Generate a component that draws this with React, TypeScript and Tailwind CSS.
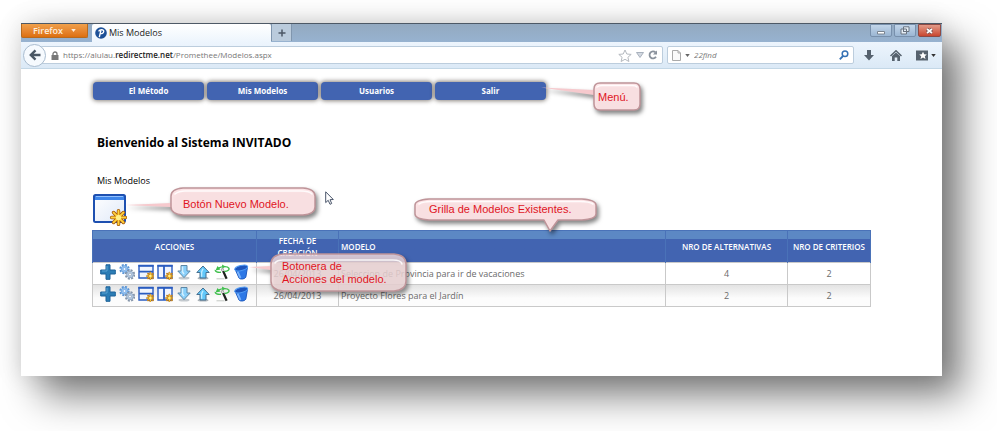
import type { ReactNode } from "react";

const uiFont = "font-['Open_Sans','Noto_Sans',sans-serif]";

function Spark({ x, y, s }: { x: number; y: number; s: number }) {
  return (
    <g transform={`translate(${x} ${y}) scale(${s})`} strokeLinecap="round">
      <path d="M0-7V7M-7 0H7M-5-5L5 5M-5 5L5-5" stroke="#a65a08" strokeWidth="3.6" />
      <path d="M0-7V7M-7 0H7M-5-5L5 5M-5 5L5-5" stroke="#ffd23c" strokeWidth="2" />
      <circle r="2.6" fill="#fff08a" />
    </g>
  );
}

function Icon({ children }: { children: ReactNode }) {
  return (
    <svg viewBox="0 0 16 16" className="block size-4" fill="none" aria-hidden="true">
      {children}
    </svg>
  );
}

const PlusIcon = () => (
  <Icon>
    <path d="M6 .8h4v5.200h5.300v4H10v5.300H6V10H.7V6H6z" fill="#2c7db5" stroke="#1f6399" strokeLinejoin="round" />
    <path d="M7 2v5H2" stroke="#5ba3d2" />
  </Icon>
);

const GearsIcon = () => (
  <Icon>
    <circle cx="5.500" cy="5" r="4.200" stroke="#5a94d6" strokeWidth="2" strokeDasharray="2 1.300" />
    <circle cx="5.500" cy="5" r="3.300" fill="#9cc8f4" stroke="#6fa6e0" />
    <circle cx="5.500" cy="5" r="1.500" fill="#eef6ff" stroke="#5a94d6" strokeWidth=".6" />
    <circle cx="11" cy="10.500" r="4.200" stroke="#8494a8" strokeWidth="2" strokeDasharray="2 1.300" />
    <circle cx="11" cy="10.500" r="3.300" fill="#bcd2ea" stroke="#93a9c4" />
    <circle cx="11" cy="10.500" r="1.500" fill="#f4f8fc" stroke="#7d90a8" strokeWidth=".6" />
  </Icon>
);

const RowsIcon = () => (
  <Icon>
    <path d="M1 1.500h14v12.500H1z" fill="#f0f5fe" stroke="#2a5cc0" strokeWidth="1.400" />
    <path d="M.4 1.800h15.200M1 7.600h14" stroke="#2a5cc0" strokeWidth="1.800" />
    <Spark x={12.4} y={12} s={0.48} />
  </Icon>
);

const ColumnsIcon = () => (
  <Icon>
    <path d="M1 1.500h14v12.500H1z" fill="#f0f5fe" stroke="#2a5cc0" strokeWidth="1.400" />
    <path d="M.4 1.800h15.200M7 2v12" stroke="#2a5cc0" strokeWidth="1.800" />
    <Spark x={12.4} y={12} s={0.48} />
  </Icon>
);

const DownIcon = () => (
  <Icon>
    <ellipse cx="8" cy="14" rx="5.500" ry="1.500" fill="#c3c9ce" />
    <path d="M5 1.500h6v5.500h3.200L8 13.600 1.800 7H5z" fill="#8ad0fa" stroke="#5c87a6" strokeLinejoin="round" />
    <path d="M6.500 2.500v5.500l1.500 2" stroke="#d4f0ff" strokeWidth="1.500" />
  </Icon>
);

const UpIcon = () => (
  <Icon>
    <ellipse cx="8" cy="14.200" rx="5.500" ry="1.300" fill="#a9b1b7" />
    <path d="M5 14h6V8.500h3.200L8 2 1.800 8.500H5z" fill="#62c8fa" stroke="#456f90" strokeLinejoin="round" />
    <path d="M6.600 12.800V8L8 4.800" stroke="#c2ecff" strokeWidth="1.400" />
  </Icon>
);

const WandIcon = () => (
  <Icon>
    <path d="M2.500 14.800h8" stroke="#c4c8c4" />
    <path d="M8 4.500l4.600 10.300" stroke="#1d211d" strokeWidth="2.200" />
    <path d="M8 4.500l1.200 2.700" stroke="#d8d8d8" strokeWidth="2" />
    <path d="M10.500 7.500c3.600-.2 5-2 4.300-3.300C13.800 2.400 8.500 1.800 4.500 4.200M7 8.300C3.500 8.600 1 7.500 1.300 6" stroke="#3fbf4c" strokeWidth="1.400" />
    <path d="M1.500 6.500L3.500 2l3 3.600zM8 .5l3.600 2-3.200 2z" fill="#3fbf4c" />
  </Icon>
);

const BinIcon = () => (
  <Icon>
    <path d="M2 5l4 9c1 1.600 6 1.300 6.800-.8L14.500 3z" fill="#2d78e6" stroke="#1e5ac0" />
    <path d="M4.500 7.500l3 6.500" stroke="#79b2fb" strokeWidth="1.800" />
    <ellipse cx="8.200" cy="4" rx="6.600" ry="2.500" fill="#1d55bd" stroke="#4f9af4" transform="rotate(-14 8.200 4)" />
  </Icon>
);

const actions = [
  { label: "Agregar", Glyph: PlusIcon },
  { label: "Configurar", Glyph: GearsIcon },
  { label: "Alternativas", Glyph: RowsIcon },
  { label: "Criterios", Glyph: ColumnsIcon },
  { label: "Descargar", Glyph: DownIcon },
  { label: "Subir", Glyph: UpIcon },
  { label: "Ejecutar", Glyph: WandIcon },
  { label: "Eliminar", Glyph: BinIcon },
];

const models = [
  { date: "26/04/2013", name: "Seleccion de Provincia para ir de vacaciones", alternatives: 4, criteria: 2 },
  { date: "26/04/2013", name: "Proyecto Flores para el Jardín", alternatives: 2, criteria: 2 },
];

const columns = [
  { title: "ACCIONES", style: "text-center" },
  { title: "FECHA DE CREACIÓN", style: "px-4 text-center" },
  { title: "MODELO", style: "pl-0.5 text-left" },
  { title: "NRO DE ALTERNATIVAS", style: "text-center" },
  { title: "NRO DE CRITERIOS", style: "text-center" },
];

function TitleBar() {
  return (
    <div className="flex h-[19px] items-start border-t border-[#4d5966] bg-linear-to-b from-[#93a9c0] to-[#97b2d0]">
      <button className="flex h-3.5 w-[67px] items-center justify-center gap-2 rounded-b-xs border border-t-0 border-[#b96a1d] bg-linear-to-b from-[#f0a04a] to-[#dd6f0c] text-[9px] font-semibold text-[#fdeedd]">
        Firefox
        <svg viewBox="0 0 6 4" className="h-[3px] w-[5px]" aria-hidden="true"><path d="M0 0h6L3 4z" fill="#fdeedd" /></svg>
      </button>
      <button className="ml-1 flex h-[18px] w-[179px] items-center gap-0.5 rounded-t-xs bg-linear-to-b from-white to-[#edf5fd] pl-[3px] text-[9px] text-[#222]">
        <svg viewBox="0 0 12 12" className="size-3" aria-hidden="true">
          <circle cx="6" cy="6" r="5.800" fill="#1d5097" />
          <path d="M4.300 10.200L6 3.200M3.600 4.400C5 2 9 2.200 8.700 4.500 8.500 6.400 6.500 7 5.200 6.400" fill="none" stroke="#fff" strokeWidth="1.400" />
        </svg>
        Mis Modelos
      </button>
      <button aria-label="Nueva pestaña" className="flex h-[17px] w-[21px] items-center justify-center border-x border-[#8096ae] bg-[#bacbdc]">
        <svg viewBox="0 0 8 8" className="size-2" aria-hidden="true"><path d="M4 .5v7M.5 4h7" stroke="#4c5866" strokeWidth="1.500" /></svg>
      </button>
      <div className="ml-auto flex gap-0.5 pr-px">
        <button aria-label="Minimizar" className="flex h-[13px] w-[22px] items-center justify-center rounded-b-xs border border-[#7890ac] bg-linear-to-b from-[#c2d5e9] to-[#9bb6d3]">
          <svg viewBox="0 0 10 8" className="h-2 w-2.5" aria-hidden="true"><path d="M1.500 4.500h7v2.500h-7z" fill="#fff" stroke="#7a8490" /></svg>
        </button>
        <button aria-label="Restaurar" className="flex h-[13px] w-[22px] items-center justify-center rounded-b-xs border border-[#7890ac] bg-linear-to-b from-[#c2d5e9] to-[#9bb6d3]">
          <svg viewBox="0 0 10 9" className="h-[9px] w-2.5" aria-hidden="true"><path d="M3.500.8h5.500v4.700H3.500zM1 3h5.500v5H1z" fill="#e6eef6" stroke="#6a7480" /><path d="M3 5h1.500v1H3z" fill="#6a7480" /></svg>
        </button>
        <button aria-label="Cerrar" className="flex h-[13px] w-[23px] items-center justify-center rounded-b-xs border border-[#8d4a44] bg-linear-to-b from-[#e29a88] to-[#c8452e]">
          <svg viewBox="0 0 9 8" className="h-2 w-[9px]" aria-hidden="true"><path d="M2 2l5 4M7 2L2 6" stroke="#6d4a4a" strokeWidth="3" /><path d="M2 2l5 4M7 2L2 6" stroke="#fff" strokeWidth="1.700" /></svg>
        </button>
      </div>
    </div>
  );
}

function NavBar() {
  return (
    <div className="flex h-[27px] items-center border-b border-[#c3d7e6] bg-linear-to-b from-[#edf5fd] to-[#dbe9f6] pl-0.5 text-[9px]">
      <button aria-label="Atrás" className="z-10 flex size-[23px] shrink-0 items-center justify-center rounded-full border border-[#a9bccf] bg-[#f6fafe]">
        <svg viewBox="0 0 12 12" className="size-3" fill="none" aria-hidden="true"><path d="M11.500 6H2.500M6.500 1.300L1.800 6l4.700 4.700" stroke="#4a5764" strokeWidth="2.400" /></svg>
      </button>
      <div className="-ml-1.5 flex h-[18px] grow items-center rounded-xs border border-[#bccddd] bg-white pr-1 pl-2.5">
        <svg viewBox="0 0 8 9" className="h-[9px] w-2" fill="none" aria-hidden="true"><path d="M2 4.500V3a2 2 0 014 0v1.500" stroke="#777" strokeWidth="1.300" /><path d="M.5 4h7v5h-7z" fill="#777" /></svg>
        <div className="relative ml-1 h-4 grow text-[8px]">
          <input id="address" type="text" className="absolute inset-0 w-full bg-transparent outline-none" />
          <label htmlFor="address" className="block leading-4 text-[#777]">
            https://alulau.<span className="font-semibold text-[#222]">redirectme.net</span>/Promethee/Modelos.aspx
          </label>
        </div>
        <button aria-label="Marcar página">
          <svg viewBox="0 0 14 13" className="h-[13px] w-3.5" aria-hidden="true"><path d="M7 1l1.800 4 4.400.4-3.300 2.900 1 4.200L7 10.300l-3.900 2.200 1-4.200L.8 5.400 5.200 5z" fill="#fff" stroke="#b4b9bf" /></svg>
        </button>
        <button aria-label="Historial" className="ml-1">
          <svg viewBox="0 0 8 6" className="h-1.5 w-2" aria-hidden="true"><path d="M.5.5h7L4 5.500z" fill="#d4dae2" stroke="#a8b1bd" /></svg>
        </button>
        <button aria-label="Recargar" className="ml-1">
          <svg viewBox="0 0 10 10" className="size-2.5" fill="none" aria-hidden="true"><path d="M7.500 2.400A3.500 3.500 0 108 6.800" stroke="#8a929c" strokeWidth="1.800" /><path d="M9 .5v4H5z" fill="#8a929c" /></svg>
        </button>
      </div>
      <div className="ml-1 flex h-[18px] w-[187px] shrink-0 items-center rounded-xs border border-[#bccddd] bg-white px-1">
        <svg viewBox="0 0 9 11" className="h-[11px] w-[9px]" aria-hidden="true"><path d="M.5.5h5.500l2.500 2.500v7.500h-8z" fill="#fafafa" stroke="#aaa" /><path d="M6 .5V3h2.500" fill="none" stroke="#aaa" /></svg>
        <svg viewBox="0 0 6 4" className="ml-1 h-[3px] w-[5px]" aria-hidden="true"><path d="M0 0h6L3 4z" fill="#666" /></svg>
        <input aria-label="Buscar" placeholder="22find" className="ml-1 min-w-0 grow text-[8px] italic outline-none placeholder:text-[#777]" />
        <button aria-label="Iniciar búsqueda">
          <svg viewBox="0 0 10 10" className="size-2.5" fill="none" aria-hidden="true"><circle cx="6" cy="3.800" r="2.800" stroke="#3571b4" strokeWidth="1.500" /><path d="M4 6L.8 9.300" stroke="#3571b4" strokeWidth="1.800" /></svg>
        </button>
      </div>
      <div className="flex shrink-0 items-center pr-1.5 pl-2.5">
        <button aria-label="Descargas">
          <svg viewBox="0 0 10 11" className="h-[11px] w-2.5" aria-hidden="true"><path d="M3 0h4v5h3L5 10.500 0 5h3z" fill="#56626e" /></svg>
        </button>
        <button aria-label="Inicio" className="ml-4">
          <svg viewBox="0 0 12 11" className="h-[11px] w-3" aria-hidden="true"><path d="M.5 6L6 .8 11.500 6" fill="none" stroke="#56626e" strokeWidth="1.500" /><path d="M2 6l4-3.600L10 6v5H7.300V7.500H4.700V11H2z" fill="#56626e" /></svg>
        </button>
        <button aria-label="Marcadores" className="ml-3.5 flex items-center gap-[3px]">
          <svg viewBox="0 0 12 11" className="h-[11px] w-3" aria-hidden="true"><path d="M0 .5h12v10H0z" fill="#56626e" /><path d="M7 1.800l1.200 2.500 2.600.2-2 1.800.7 2.700L7 7.600 4.500 9l.7-2.700-2-1.800 2.600-.2z" fill="#fff" /></svg>
          <svg viewBox="0 0 6 4" className="h-[3px] w-[5px]" aria-hidden="true"><path d="M0 0h6L3 4z" fill="#333" /></svg>
        </button>
      </div>
    </div>
  );
}

type CalloutProps = {
  place: string;
  textPlace: string;
  width: number;
  height: number;
  shape: string;
  shine: string;
  leader?: string;
  opacity?: number;
  children: ReactNode;
};

/** Translucent pink balloon that explains one part of the page. */
function Callout({ place, textPlace, width, height, shape, shine, leader, opacity = 0.95, children }: CalloutProps) {
  return (
    <div className={`pointer-events-none absolute z-20 ${place}`}>
      <svg width={width} height={height} className="block overflow-visible drop-shadow-[2px_3px_2px_rgba(0,0,0,0.5)]" aria-hidden="true">
        {leader && <path d={leader} fill="#f6c9cd" />}
        <path d={shape} fill="#fee4e6" fillOpacity={opacity} stroke="#bf9499" strokeWidth="1.5" strokeLinejoin="round" />
        <path d={shine} fill="none" stroke="#fff" strokeWidth="1.5" strokeOpacity="0.85" strokeLinecap="round" />
      </svg>
      <p className={`absolute font-['Liberation_Sans',Arial,sans-serif] text-[11px] leading-[13px] whitespace-nowrap text-[#e0141e] ${textPlace}`}>{children}</p>
    </div>
  );
}

const cell = "border border-[#c9c9c9] p-0";

export default function App() {
  return (
    <div className={`overflow-hidden bg-white pt-[23px] pr-[55px] pb-[55px] pl-[21px] ${uiFont}`}>
      <div className="relative bg-white shadow-[20px_20px_36px_rgba(0,0,0,0.5),0_0_24px_rgba(0,0,0,0.14)]">
        <TitleBar />
        <NavBar />
        <main className="px-[71px] pt-[13px] pb-[69px]">
          <nav className="flex gap-[3px] pl-px">
            {["El Método", "Mis Modelos", "Usuarios", "Salir"].map((item) => (
              <a key={item} href="#" className="h-[18px] w-[111px] rounded-sm bg-[#4264b1] text-center text-[8px] leading-[18px] font-bold text-white shadow-[0_0_4px_1px_rgba(60,50,40,0.6)]">
                {item}
              </a>
            ))}
          </nav>
          <h1 className="mt-[33px] pl-[5px] text-xs leading-5 font-bold text-black">Bienvenido al Sistema INVITADO</h1>
          <h2 className="mt-[22px] pl-[5px] text-[9px] leading-3 font-medium text-black">Mis Modelos</h2>
          <button aria-label="Nuevo modelo" className="mt-[7px] ml-px block">
            <svg viewBox="0 0 34 32" className="block h-8 w-[34px]" aria-hidden="true">
              <defs><linearGradient id="pane" x1="0" y1="0" x2="1" y2="1"><stop stopColor="#fff" /><stop offset="1" stopColor="#dfe9f8" /></linearGradient></defs>
              <rect x="1" y="1" width="31" height="27" rx="1.500" fill="url(#pane)" stroke="#1e50b0" strokeWidth="2" />
              <path d="M2 2h29v4H2z" fill="#3e86ea" />
              <path d="M3 2.500h27" stroke="#8fc0ff" />
              <Spark x={25.5} y={23.5} s={0.98} />
            </svg>
          </button>
          <table className="mt-1 w-full table-fixed border-collapse text-[9px] text-[#6b6b6b]">
            <colgroup>
              <col className="w-[164px]" />
              <col className="w-[82px]" />
              <col />
              <col className="w-[122px]" />
              <col className="w-[83px]" />
            </colgroup>
            <thead>
              <tr className="h-8 bg-linear-to-b from-[#5c88c4] from-25% to-[#4264b1] to-25% text-[8px] leading-3 text-white">
                {columns.map(({ title, style }) => (
                  <th key={title} className={`border-x border-t border-[#4a72b8] p-0 font-semibold ${style}`}>{title}</th>
                ))}
              </tr>
            </thead>
            <tbody>
              {models.map((model, row) => (
                <tr key={model.name} className={row ? "h-[22px] bg-linear-to-b from-[#e3e3e3] to-[#fcfcfc] to-60%" : "h-[22px] bg-white"}>
                  <td className={`${cell} align-top`}>
                    <div className="flex justify-center gap-[3px] pt-px">
                      {actions.map(({ label, Glyph }) => (
                        <button key={label} aria-label={label}><Glyph /></button>
                      ))}
                    </div>
                  </td>
                  <td className={`${cell} text-center`}>{model.date}</td>
                  <td className={`${cell} pl-0.5`}>{model.name}</td>
                  <td className={`${cell} text-center`}>{model.alternatives}</td>
                  <td className={`${cell} text-center`}>{model.criteria}</td>
                </tr>
              ))}
            </tbody>
          </table>
        </main>

        <Callout place="top-[60px] left-[573px]" textPlace="top-2 left-1" width={46} height={27} leader="M-53 4.500L0 7V12z" shape="M6 0H40Q46 0 46 6V21Q46 27 40 27H6Q0 27 0 21V6Q0 0 6 0z" shine="M3 4Q5 2.500 8 2.500H38Q42 2.500 43 4">
          Menú.
        </Callout>
        <Callout place="top-[165px] left-[150px]" textPlace="top-[10px] left-3" width={144} height={27} leader="M-46 17L0 15V19z" shape="M12 0H132Q144 1 144 8V19Q144 26 132 27H12Q0 26 0 19V8Q0 1 12 0z" shine="M4 6Q8 3 14 3H130Q138 3 141 6">
          Botón Nuevo Modelo.
        </Callout>
        <Callout place="top-[176px] left-[394px]" textPlace="top-1 left-3.5" width={181} height={21} shape="M14 0H167Q181 1 181 6V15Q181 20 167 21H143L135 32 129 21H14Q0 20 0 15V6Q0 1 14 0z" shine="M4 5Q8 2.500 16 2.500H165Q174 2.500 178 5">
          Grilla de Modelos Existentes.
        </Callout>
        <Callout place="top-[231px] left-[250px]" textPlace="top-[6px] left-[11px]" width={135} height={37} leader="M-22 13L0 12V16z" opacity={0.78} shape="M12 0H123Q135 1 135 10V27Q135 36 123 37H12Q0 36 0 27V10Q0 1 12 0z" shine="M4 9Q6 6 12 6H122Q130 6 131 10">
          Botonera de
          <br />
          Acciones del modelo.
        </Callout>

        <svg viewBox="0 0 9 14" className="absolute top-[168px] left-[304px] h-3.5 w-[9px]" aria-hidden="true">
          <path d="M.7.8v10.800l2.500-2.300 1.800 4 1.700-.8L5 8.700l3.300-.2z" fill="#fff" stroke="#4a556a" />
        </svg>
      </div>
    </div>
  );
}
